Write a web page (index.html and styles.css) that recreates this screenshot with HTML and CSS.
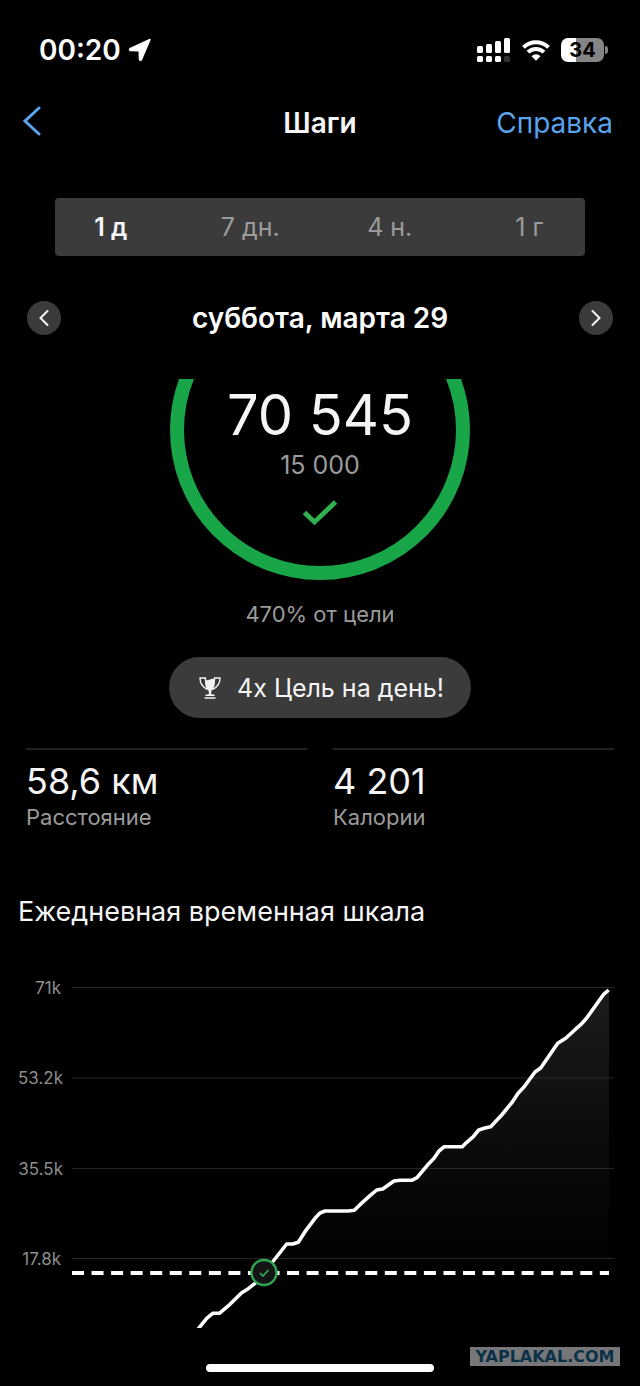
FILE: index.html
```html
<!DOCTYPE html>
<html lang="ru">
<head>
    <meta charset="UTF-8">
    <meta name="viewport" content="width=device-width, initial-scale=1.0">
    <title>Шаги</title>
    <link rel="stylesheet" href="styles.css">
</head>
<body>
    <div class="status">
        <div class="status-left">
            <span>00:20</span>
            <svg width="24" height="24" viewBox="0 0 24 24"><path d="M22 1.500 13.500 21.500Q12.500 23.500 11.500 21.500L11.200 12.800 2.500 12.500Q.5 11.500 2.500 10.500Z" fill="#fff" stroke="#fff" stroke-width="1.500" stroke-linejoin="round"/></svg>
        </div>
        <div class="status-right">
            <svg width="34" height="24" viewBox="0 0 34 24" fill="#fff">
                <rect x="0" y="8" width="6" height="7" rx="1.500"/>
                <rect x="9" y="6" width="6" height="9" rx="1.500"/>
                <rect x="18" y="3" width="6" height="12" rx="1.500"/>
                <rect x="27" y="0" width="6" height="15" rx="1.500"/>
                <rect x="0" y="18" width="6" height="6" rx="1.500"/>
                <rect x="9" y="18" width="6" height="6" rx="1.500"/>
                <rect x="18" y="18" width="6" height="6" rx="1.500"/>
                <rect x="27" y="18" width="6" height="6" rx="1.500" fill="#333"/>
            </svg>
            <svg width="28" height="22" viewBox="0 0 28 22" fill="none" stroke="#fff" stroke-width="4">
                <path d="M1.500 8.300a17.700 17.700 0 0 1 25 0"/>
                <path d="M6 13.200a11.400 11.400 0 0 1 16 0"/>
                <path d="M14 21.800 9.500 17.200a6.300 6.300 0 0 1 9 0Z" fill="#fff" stroke="none"/>
            </svg>
            <div class="battery"><span>34</span></div>
        </div>
    </div>

    <header class="top">
        <button class="back" aria-label="Назад">
            <svg width="18" height="30" viewBox="0 0 18 30" fill="none" stroke="#5ba3ea" stroke-width="3" stroke-linecap="round"><path d="M16 2 2 15 16 28"/></svg>
        </button>
        <h1>Шаги</h1>
        <a class="help" href="#">Справка</a>
    </header>

    <div class="tabs">
        <div class="tabs-row">
            <button class="active">1 д</button>
            <button>7 дн.</button>
            <button>4 н.</button>
            <button>1 г</button>
        </div>
    </div>

    <div class="date">
        <button class="arrow" aria-label="Предыдущий день">
            <svg width="10" height="16" viewBox="0 0 10 16"><path d="M8.500 1 1.500 8l7 7"/></svg>
        </button>
        <h2>суббота, марта 29</h2>
        <button class="arrow" aria-label="Следующий день">
            <svg width="10" height="16" viewBox="0 0 10 16"><path d="m1.500 1 7 7-7 7"/></svg>
        </button>
    </div>

    <div class="goal">
        <div class="ring">
            <p class="steps">70 545</p>
            <p class="target">15 000</p>
            <svg class="check" width="34" height="26" viewBox="0 0 34 26"><path d="M1.500 12.500 11.500 22 32.500 2" fill="none" stroke="#30b04f" stroke-width="4.800"/></svg>
        </div>
        <p class="percent">470% от цели</p>
        <div class="badge">
            <svg width="22" height="22" viewBox="0 0 22 22" fill="none" stroke="#f2f2f2" stroke-width="1.400">
                <path d="M6 2.500Q8 4 11 2.500T16 2.500q.5 8-3.500 11L12 17l2.500 1.300h-7L10 17l-.5-3.500Q5.500 10.500 6 2.500Z" fill="#f2f2f2" stroke="none"/>
                <path d="M6.500 3V1H1q0 8 7.500 11.500M15.500 3V1H21q0 8-7.500 11.500M5.500 21h11M6.500 18.300h9"/>
            </svg>
            <span>4x Цель на день!</span>
        </div>
    </div>

    <div class="stats">
        <div class="stat">
            <p class="value">58,6 км</p>
            <p class="label">Расстояние</p>
        </div>
        <div class="stat">
            <p class="value">4 201</p>
            <p class="label">Калории</p>
        </div>
    </div>

    <h3>Ежедневная временная шкала</h3>
    <svg class="chart" viewBox="0 0 640 360">
        <defs>
            <linearGradient id="fade" x1="0" y1="0" x2="0" y2="1">
                <stop offset="0" stop-color="#1c1c1c"/>
                <stop offset="0.500" stop-color="#0a0a0a"/>
                <stop offset="0.850" stop-color="#000"/>
            </linearGradient>
            <clipPath id="plot"><rect x="72" y="0" width="542" height="358"/></clipPath>
        </defs>
        <path fill="url(#fade)" d="M198 358 213 343.500 219 343.500 230 334.300 242 322.500 255 313.500 264 302.500 287 274 298 272.300 315 248.500 325 241 354 240.500 377 220 394 211 412 210.300 427 195.500 444 176.700 462 176.700 479 160 491 156.700 512 132 535 102 558 73.300 575 59.500 587 48 603 24.500 609 20V358Z"/>
        <path class="grid" d="M72 17.500H614M72 108H614M72 198.500H614M72 288.500H614"/>
        <path class="goal-line" d="M72 303H609"/>
        <polyline class="line" clip-path="url(#plot)" points="196.500,361 206.700,348.300 212.700,343.300 219.300,343.300 230,334.300 241.700,322.700 248.300,318.700 255,313.300 264,302.700 273.300,291 286.700,274 292.700,274 298.300,272.300 305,261.700 315,248.300 320,243 325,241 348.300,241 354.300,240.300 360,234.700 370,225.700 376.700,220 382.700,219 394,211 400,210.300 411.700,210.300 417,207.700 427.300,195.300 434,188.300 439,181 444.300,176.700 462.300,176.700 466.700,172.300 473.300,166.700 478.700,160 485,158 490.700,156.700 501.700,145 512.300,132 518.300,123 524,117 535,102 540.700,98 557.700,73.300 565.700,68.300 575,59.700 580.700,54.700 586.700,48 603.300,24.700 608.700,20"/>
        <circle cx="264" cy="302.500" r="12.500" fill="#141414" stroke="#2fa350" stroke-width="2.400"/>
        <path d="m260 303 3 3 5.500-6" fill="none" stroke="#2fb050" stroke-width="1.600"/>
        <g class="axis">
            <text x="61" y="24">71k</text>
            <text x="63" y="114">53.2k</text>
            <text x="63" y="205">35.5k</text>
            <text x="61" y="295">17.8k</text>
        </g>
    </svg>

    <div class="home"></div>
    <div class="watermark">YAPLAKAL.COM</div>
</body>
</html>
```
FILE: styles.css
```css
*,*::before,*::after{
    box-sizing: border-box;
}
body{
    margin: 0;
    position: relative;
    background-color: #000;
    color: #f5f5f5;
    font-family: Inter, "Liberation Sans", sans-serif;
}
h1,h2,h3,p{
    margin: 0;
    font-weight: normal;
}
button{
    padding: 0;
    border: none;
    background: none;
    color: inherit;
    font-family: inherit;
    cursor: pointer;
}
svg{
    display: block;
}

/* status bar */
.status{
    display: flex;
    justify-content: space-between;
    align-items: center;
    height: 80px;
    padding: 20px 32px 0 39px;
}
.status-left,.status-right{
    display: flex;
    align-items: center;
}
.status-left{
    gap: 7px;
    font-size: 28px;
    font-weight: 600;
    color: #fff;
}
.status-right{
    gap: 11px;
}
.battery{
    position: relative;
    width: 43px;
    height: 24px;
    margin-right: 4px;
    border-radius: 7px;
    background: linear-gradient(to right, #fff 35%, #858585 35%);
    color: #000;
    font-size: 20px;
    font-weight: 700;
    line-height: 24px;
    text-align: center;
}
.battery::after{
    content: "";
    position: absolute;
    right: -4px;
    top: 8px;
    width: 3px;
    height: 8px;
    border-radius: 0 4px 4px 0;
    background-color: #858585;
}

/* title */
.top{
    display: grid;
    grid-template-columns: 1fr auto 1fr;
    align-items: center;
    height: 86px;
    padding: 0 23px;
}
.top h1{
    font-size: 28px;
    font-weight: 600;
}
.back{
    justify-self: start;
    margin-bottom: 4px;
}
.help{
    justify-self: end;
    margin-right: 4px;
    color: #5ba3ea;
    font-size: 28px;
    text-decoration: none;
}

/* period */
.tabs{
    margin: 32px 55px 0;
    border-radius: 4px;
    background-color: #3b3b3b;
}
.tabs-row{
    display: grid;
    grid-template-columns: repeat(4, 1fr);
    margin: 0 -14px;
}
.tabs button{
    height: 58px;
    color: #9b9b9b;
    font-size: 25px;
}
.tabs .active{
    color: #f5f5f5;
    font-weight: 600;
}
.date{
    display: flex;
    justify-content: space-between;
    align-items: center;
    height: 34px;
    margin: 45px 27px 44px;
}
.date h2{
    font-size: 28px;
    font-weight: 600;
    color: #fff;
}
.arrow{
    display: flex;
    align-items: center;
    justify-content: center;
    width: 34px;
    height: 34px;
    border-radius: 50%;
    background-color: #3b3b3b;
}
.arrow path{
    fill: none;
    stroke: #f5f5f5;
    stroke-width: 2;
    stroke-linecap: round;
}

/* goal */
.goal{
    display: flex;
    flex-direction: column;
    align-items: center;
}
.ring{
    position: relative;
    display: flex;
    flex-direction: column;
    align-items: center;
    width: 300px;
    height: 201px;
    overflow: hidden;
}
.ring::before{
    content: "";
    position: absolute;
    left: 0;
    bottom: 0;
    width: 300px;
    height: 300px;
    border: 14px solid #18a648;
    border-radius: 50%;
}
.steps{
    font-size: 56px;
    line-height: 72px;
}
.target{
    color: #9b9b9b;
    font-size: 25px;
    line-height: 28px;
}
.check{
    margin-top: 21px;
}
.percent{
    margin: 20px 0 29px;
    color: #9b9b9b;
    font-size: 22px;
    line-height: 28px;
}
.badge{
    display: flex;
    align-items: center;
    gap: 16px;
    height: 61px;
    padding: 0 27px 0 30px;
    border-radius: 31px;
    background-color: #3b3b3b;
    font-size: 25px;
}

/* totals */
.stats{
    display: grid;
    grid-template-columns: 1fr 1fr;
    gap: 26px;
    margin: 30px 26px 0;
}
.stat{
    padding-top: 11px;
    border-top: 2px solid #222;
}
.value{
    font-size: 36px;
    line-height: 40px;
}
.label{
    color: #9b9b9b;
    font-size: 22px;
    line-height: 32px;
}
h3{
    margin: 61px 18px 40px;
    font-size: 27px;
    line-height: 36px;
}

/* timeline */
.chart{
    width: 100%;
    height: auto;
}
.grid{
    stroke: #262626;
    stroke-width: 1;
}
.goal-line{
    stroke: #fff;
    stroke-width: 4;
    stroke-dasharray: 12 7.550;
}
.line{
    fill: none;
    stroke: #fff;
    stroke-width: 3.600;
    stroke-linejoin: round;
}
.axis{
    fill: #8e8e8e;
    font-size: 17px;
    text-anchor: end;
}
.home{
    width: 228px;
    height: 8px;
    margin: 34px auto 14px;
    border-radius: 4px;
    background-color: #fff;
}
.watermark{
    position: absolute;
    right: 20px;
    bottom: 20px;
    width: 150px;
    height: 19px;
    background-color: #77777a;
    color: #0c3147;
    font-family: "DejaVu Sans", sans-serif;
    font-size: 16px;
    font-weight: bold;
    line-height: 20px;
    text-align: center;
}
```
